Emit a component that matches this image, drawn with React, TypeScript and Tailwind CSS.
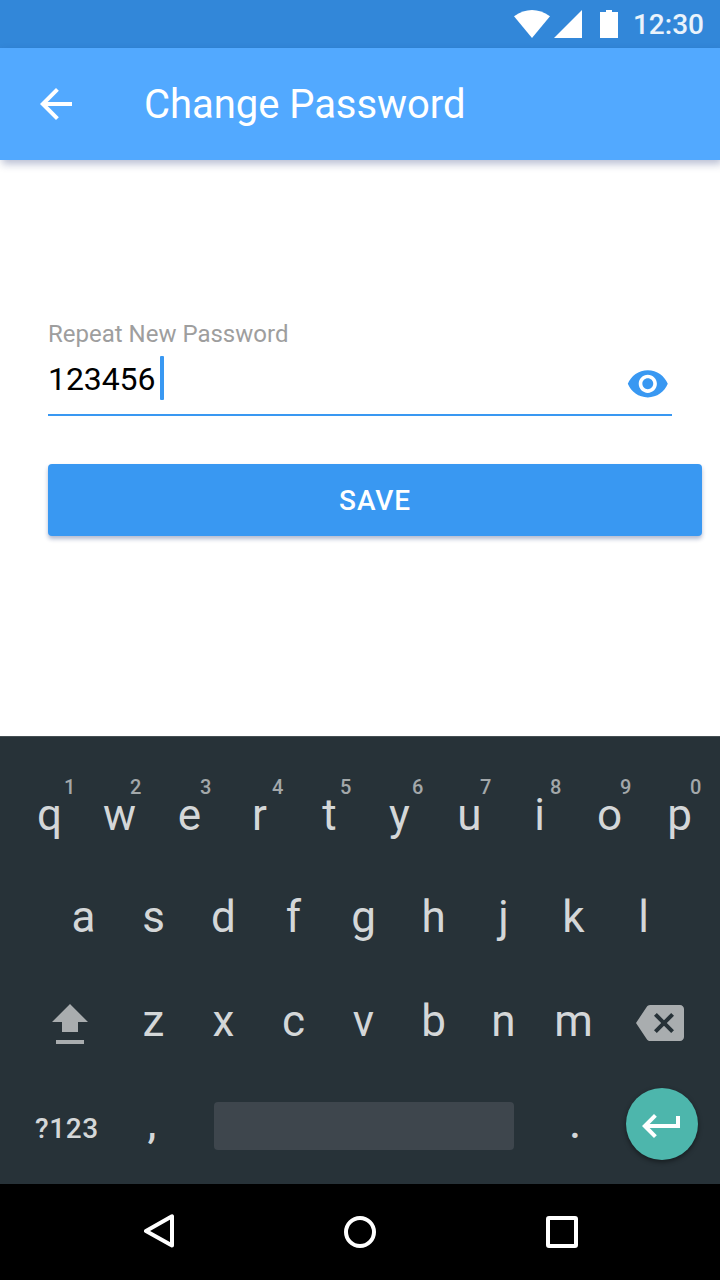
import React from "react";
import { MdArrowBack, MdVisibility, MdBackspace, MdKeyboardReturn } from "react-icons/md";

const topRow = [
  { letter: "q", digit: "1", place: "left-[49.5px]" },
  { letter: "w", digit: "2", place: "left-[45.5px]" },
  { letter: "e", digit: "3", place: "left-[45.5px]" },
  { letter: "r", digit: "4", place: "left-[47.5px]" },
  { letter: "t", digit: "5", place: "left-[45.5px]" },
  { letter: "y", digit: "6", place: "left-[47.5px]" },
  { letter: "u", digit: "7", place: "left-[45.5px]" },
  { letter: "i", digit: "8", place: "left-[45.5px]" },
  { letter: "o", digit: "9", place: "left-[45.5px]" },
  { letter: "p", digit: "0", place: "left-[45.5px]" },
];

function Key({ children }: { children: React.ReactNode }) {
  return (
    <button className="relative flex h-full w-[70px] shrink-0 items-center justify-center">
      {children}
    </button>
  );
}

function StatusBar() {
  return (
    <div className="flex h-12 items-center justify-end bg-[#3287d9] pr-4 text-white">
      <svg width="104" height="28" viewBox="0 0 104 28" fill="currentColor">
        <path d="M0 6.2Q18-6 36 6.2L18 28Z" />
        <path d="M40 28H68V0Z" />
        <path d="M86 2H92V0H98V2H104V28H86Z" />
      </svg>
      <span className="ml-[15px] pt-0.5 text-[28px] font-medium leading-8 text-white/90">12:30</span>
    </div>
  );
}

function AppBar() {
  return (
    <header className="z-10 flex h-28 items-center bg-[#52a9ff] pl-8 text-white shadow-[2px_4px_8px_rgba(20,40,110,0.3)]">
      <MdArrowBack size={48} />
      <h1 className="ml-16 pt-0.5 text-[40px] leading-[48px] tracking-[-0.05px]">Change Password</h1>
    </header>
  );
}

function PasswordForm() {
  return (
    <main className="flex h-[576px] flex-col bg-white pl-12 pt-[158px]">
      <label className="h-8 text-2xl leading-8 text-[#9e9e9e]">Repeat New Password</label>
      <div className="flex h-[66px] w-[624px] justify-between border-b-2 border-[#3998f2]">
        <div className="flex pt-[6px]">
          <span className="w-28 text-[32px] leading-[46px] tracking-[-0.1px] text-black">123456</span>
          <span className="h-11 w-1 rounded-[1px] bg-[#3998f2]" />
        </div>
        <MdVisibility className="mr-[2px] mt-3 text-[#3998f2]" size={43.6} />
      </div>
      <button className="mt-12 h-[72px] w-[654px] rounded bg-[#3998f2] pt-0.5 text-[28px] font-medium leading-8 tracking-[0.9px] text-white shadow-[0_3px_4px_rgba(20,40,110,0.32)]">
        SAVE
      </button>
    </main>
  );
}

function Keyboard() {
  return (
    <section className="flex h-[448px] flex-col border-t border-[#454f53] bg-[#273238] pt-[27px] text-[44px] leading-[52px] text-[#d4d7d8]">
      <div className="flex h-[102px] pl-[14.5px]">
        {topRow.map((key) => (
          <Key key={key.letter}>
            {key.letter}
            <span className={"absolute top-[11px] text-xl font-medium leading-6 text-[#a3a8aa] " + key.place}>
              {key.digit}
            </span>
          </Key>
        ))}
      </div>
      <div className="flex h-[102px] pl-[48.5px]">
        {"asdfghjkl".split("").map((letter) => (
          <Key key={letter}>{letter}</Key>
        ))}
      </div>
      <div className="flex h-[106px] items-center">
        <button className="mr-[30.5px] ml-[52px] pt-[6px]">
          <svg width="36" height="40" viewBox="0 0 36 40" fill="#a9adaf">
            <path d="M18 0L36 18H26V28H10V18H0Z" />
            <path d="M4 36H32V40H4Z" />
          </svg>
        </button>
        {"zxcvbnm".split("").map((letter) => (
          <Key key={letter}>{letter}</Key>
        ))}
        <button className="ml-[27.5px] pt-[4px] text-[#a9adaf]">
          <MdBackspace size={48} />
        </button>
      </div>
      <div className="flex h-[104px] items-center">
        <button className="w-[106px] whitespace-nowrap pl-[35px] pt-1.5 text-left text-[28px] font-medium leading-8 tracking-[0.6px]">
          ?123
        </button>
        <button className="ml-[11px] w-[70px] pb-[3px] text-[40px] font-medium">,</button>
        <button className="ml-[27px] h-12 w-[300px] rounded bg-[#3e464d]" aria-label="space" />
        <button className="ml-[26px] w-[70px] pb-[3px] text-[40px] font-medium">.</button>
        <button className="-mt-1 ml-4 flex size-[72px] items-center justify-center rounded-full bg-[#4db6ac] pt-[3px] text-white shadow-[0_2px_5px_rgba(0,0,0,0.45)]">
          <MdKeyboardReturn size={48} />
        </button>
      </div>
    </section>
  );
}

function NavigationBar() {
  return (
    <nav className="flex h-24 items-center bg-black pl-[144px]">
      <svg width="32" height="36" viewBox="0 0 32 36" fill="none" stroke="white" strokeWidth="4" strokeLinejoin="round">
        <path d="M28 2.3V31.5L2 17Z" />
      </svg>
      <span className="ml-[168px] size-8 rounded-full border-4 border-white" />
      <span className="ml-[170px] size-8 rounded-[3px] border-4 border-white" />
    </nav>
  );
}

export default function App() {
  return (
    <div className="flex h-[1280px] w-[720px] flex-col overflow-hidden bg-white font-[Roboto,sans-serif]">
      <StatusBar />
      <AppBar />
      <PasswordForm />
      <Keyboard />
      <NavigationBar />
    </div>
  );
}
